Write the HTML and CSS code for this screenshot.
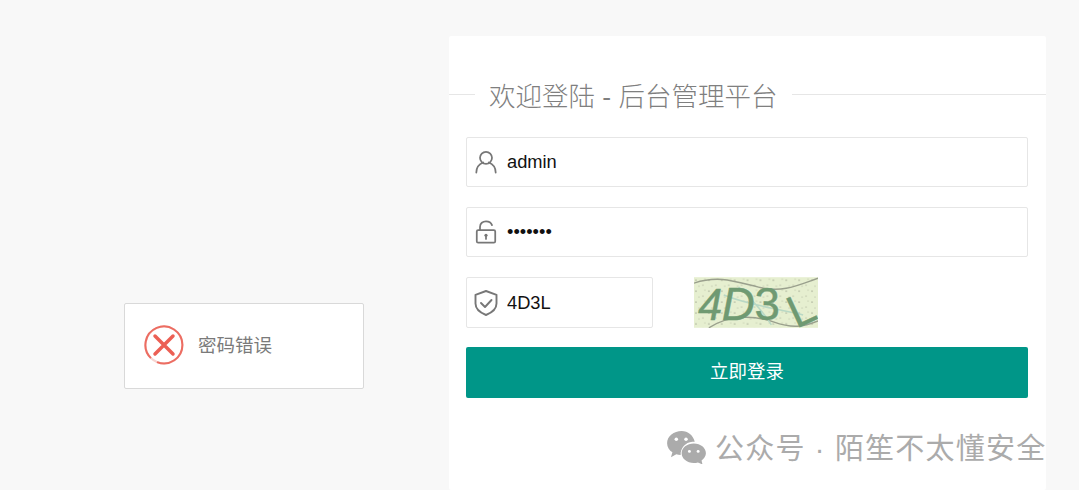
FILE: index.html
```html
<!DOCTYPE html>
<html lang="zh">
<head>
<meta charset="utf-8">
<title>后台管理平台</title>
<link rel="stylesheet" href="styles.css">
</head>
<body>
<main class="card">
  <fieldset class="title-line"><legend>欢迎登陆 - 后台管理平台</legend></fieldset>
  <form class="form">
    <label class="field">
      <svg class="ico" viewBox="-1 -1 26 28"><circle cx="12" cy="8.500" r="6.500"/><path d="M1.500 24.500c0-5.500 3.500-9.500 7.500-11M22.500 24.500c0-5.500-3.500-9.500-7.500-11"/></svg>
      <input type="text" value="admin">
    </label>
    <label class="field">
      <svg class="ico" viewBox="-1 0 26 26"><path d="M5.500 11V7.500C5.500 3.500 8.500 1.500 12 1.500c3 0 5.500 1.300 6.500 4"/><rect x="2" y="11" width="20" height="13.500" rx="1.500"/><circle class="solid" cx="12" cy="16.500" r="1.700"/><path d="M12 16.500v4"/></svg>
      <input type="password" value="1234567">
    </label>
    <div class="captcha-row">
      <label class="field small">
        <svg class="ico" viewBox="0 0 24 26"><path d="M12 1l10.500 3.800v8.700c0 5.500-5.500 9.500-10.500 11.500C7 23 1.500 19 1.500 13.500V4.800z"/><path d="M7 13l4 4 6.500-7"/></svg>
        <input type="text" value="4D3L">
      </label>
      <svg class="captcha" viewBox="0 0 125 51" role="img" aria-label="4D3L">
        <defs>
          <pattern id="speck" width="13" height="11" patternUnits="userSpaceOnUse">
            <circle cx="2" cy="3" r=".6" fill="#6e7263"/>
            <circle cx="9" cy="8" r=".5" fill="#8d9280"/>
            <circle cx="11" cy="2" r=".5" fill="#a9b096"/>
            <circle cx="5" cy="9" r=".4" fill="#6e7263"/>
          </pattern>
        </defs>
        <rect width="125" height="51" fill="#e6efd0"/>
        <rect width="125" height="51" fill="url(#speck)"/>
        <path d="M0 6C25 -2 40 4 65 10S105 8 125 1" class="noise"/>
        <path d="M15 51C35 38 60 38 80 45S110 50 125 44" class="noise"/>
        <path d="M30 18C55 28 75 30 110 38M45 10C60 24 70 35 78 48" class="noise light"/>
        <text x="4" y="43" class="cap-a">4</text>
        <text x="28" y="43" class="cap-b">D</text>
        <text x="61" y="43" class="cap-c">3</text>
        <text transform="translate(103 52) rotate(-25)" class="cap-d">L</text>
      </svg>
    </div>
    <button type="button" class="submit">立即登录</button>
  </form>
</main>

<div class="toast">
  <svg class="toast-ico" viewBox="0 0 40 40"><circle class="ring-pale" cx="20" cy="20" r="18.500"/><path class="ring" d="M6.900 33.100A18.500 18.500 0 1 1 13 37.100"/><path class="cross" d="M11 11l18 18M29 11L11 29"/></svg>
  <span>密码错误</span>
</div>

<div class="mark">
  <svg class="wechat" viewBox="0 0 40 34">
    <path d="M15 0C7 0 0 5.500 0 12.500c0 4 2.300 7.300 5.500 9.500L4 27l5.500-3c1.500.4 3 .6 4.500.6 -.5-6.500 5-13 12-13.500h2.500C27 4.500 21.500 0 15 0z"/>
    <path d="M27.500 13C20.500 13 15 17.500 15 23s5.500 10 12.500 10c1.500 0 3-.2 4.300-.6L36.500 34.500l-1-4.200C38 28.500 40 26 40 23c0-5.500-5.500-10-12.500-10z"/>
    <circle class="eye" cx="9.500" cy="8.500" r="1.800"/><circle class="eye" cx="19.500" cy="8.500" r="1.800"/>
    <circle class="eye" cx="23" cy="21" r="1.500"/><circle class="eye" cx="32" cy="21" r="1.500"/>
  </svg>
  <span>公众号 · 陌笙不太懂安全</span>
</div>
</body>
</html>
```
FILE: styles.css
```css
* { box-sizing: border-box; }
html, body { height: 100%; }
body {
  margin: 0;
  height: 490px;
  overflow: hidden;
  background: #f8f8f8;
  font-family: "Liberation Sans", "Noto Sans CJK SC", sans-serif;
  padding: 36px 33px 0 449px;
}
.card {
  height: 454px;
  background: #fff;
  border-radius: 2px;
  padding-top: 42px;
}
.title-line {
  margin: 0;
  padding: 0;
  height: 59px;
  border: 0;
  border-top: 1px solid #e6e6e6;
}
.title-line legend {
  margin-left: 26px;
  padding: 6px 14px 0;
  font-size: 26.500px;
  font-weight: 300;
  color: #7f7f7f;
  line-height: 26px;
  white-space: nowrap;
}
.form {
  display: flex;
  flex-direction: column;
  gap: 20px;
  padding: 0 18px 0 17px;
}
.field {
  display: flex;
  align-items: center;
  height: 50px;
  background: #fff;
  border: 1px solid #e6e6e6;
  border-radius: 2px;
  padding-left: 7px;
  gap: 9px;
}
.field.small { width: 187px; flex: none; height: 51px; }
.field input {
  flex: 1;
  min-width: 0;
  border: 0;
  outline: 0;
  padding: 0;
  height: 100%;
  background: transparent;
  font: 18.300px "Liberation Sans", sans-serif;
  color: #111;
}
.ico {
  width: 24px;
  height: 26px;
  flex: none;
  fill: none;
  stroke: #777;
  stroke-width: 1.900;
  stroke-linecap: round;
  stroke-linejoin: round;
}
.ico .solid { fill: #777; stroke: none; }
.captcha-row { display: flex; align-items: flex-start; gap: 41px; height: 50px; }
.captcha { width: 124px; height: 51px; flex: none; display: block; }
.noise { fill: none; stroke: #9aa08d; stroke-width: 1.500; }
.noise.light { stroke: #b9d8c4; }
.captcha text { font-family: "Liberation Sans", sans-serif; fill: #6f9a72; stroke: #6f9a72; stroke-width: .4; }
.cap-a { font-size: 44px; font-style: italic; }
.cap-b { font-size: 46px; font-style: italic; }
.cap-c { font-size: 46px; }
.cap-d { font-size: 46px; }
.submit {
  height: 51px;
  border: 0;
  border-radius: 2px;
  background: #009688;
  color: #fff;
  font: 18.500px "Liberation Sans", "Noto Sans CJK SC", sans-serif;
  padding: 0 0 6px;
}
.toast {
  position: absolute;
  left: 124px;
  top: 303px;
  width: 240px;
  height: 86px;
  display: flex;
  align-items: center;
  gap: 14px;
  padding: 0 0 2px 19px;
  background: #fff;
  border: 1px solid #d9d9d9;
  border-radius: 2px;
  color: #7a7a7a;
  font-size: 18.500px;
}
.toast span { padding-bottom: 2px; }
.toast-ico { width: 40px; height: 40px; flex: none; fill: none; }
.ring-pale { stroke: #f8d3cf; stroke-width: 2; }
.ring { stroke: #ec6d62; stroke-width: 2; }
.cross { stroke: #ec5f54; stroke-width: 3.500; stroke-linecap: round; }
.mark {
  position: absolute;
  left: 667px;
  top: 425px;
  display: flex;
  align-items: center;
  gap: 9px;
  color: #ababab;
  font-size: 29px;
  letter-spacing: 1.200px;
  white-space: nowrap;
}
.wechat { width: 39px; height: 33px; flex: none; fill: #ababab; margin-top: 2px; }
.wechat .eye { fill: #fff; }
```
